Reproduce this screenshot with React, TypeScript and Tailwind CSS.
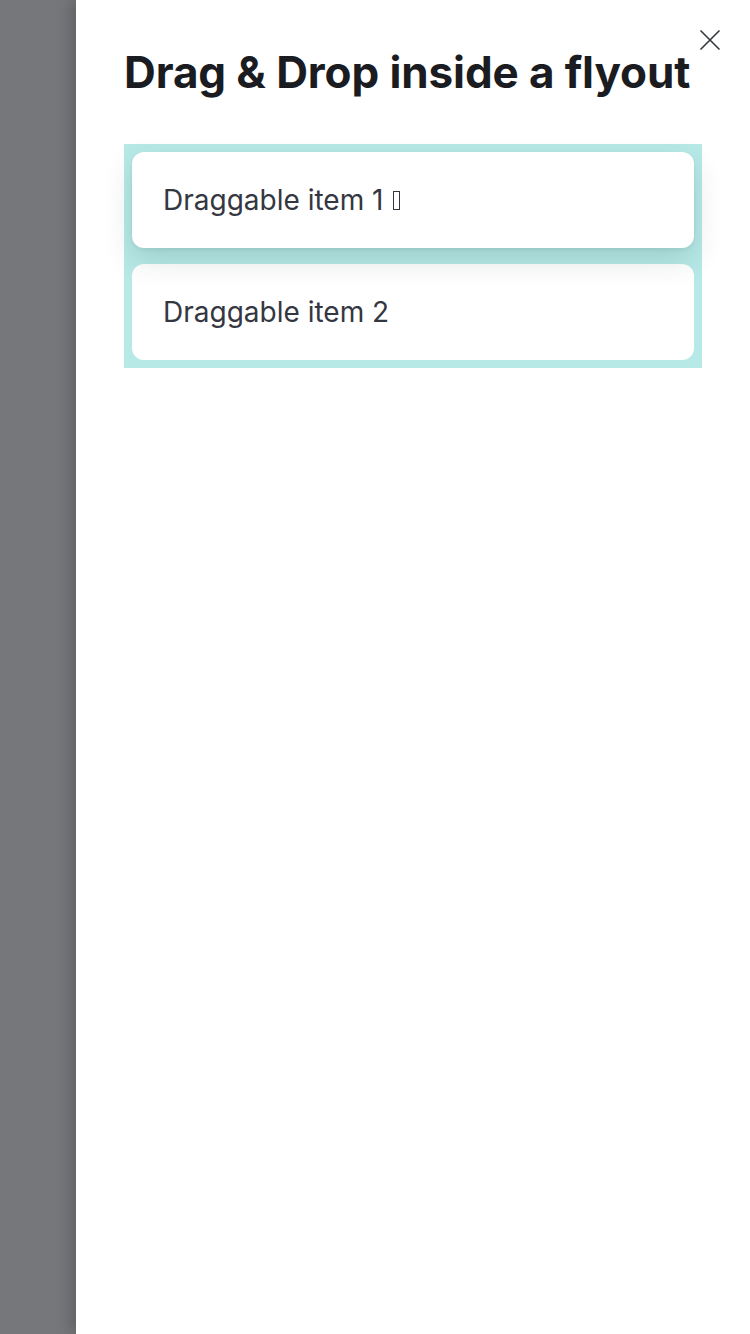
import React from "react";

export default function App() {
  return (
    <div className="flex h-[1334px] w-[750px] overflow-hidden bg-[#76777a]" style={{ fontFamily: "Inter, 'Noto Sans', sans-serif" }}>
      <div className="w-[76px] shrink-0" />
      <div className="relative flex-1 bg-white px-[48px] pt-[44px] shadow-[-6px_0_14px_rgba(0,0,0,0.18)]">
        <button className="absolute right-[29px] top-[29px] flex h-[22px] w-[22px] items-center justify-center text-[#343741]" aria-label="Close">
          <svg width="22" height="22" viewBox="0 0 22 22" fill="none" stroke="currentColor" strokeWidth="1.6">
            <path d="M1.5 1.5 L20.5 20.5 M20.5 1.5 L1.5 20.5" />
          </svg>
        </button>
        <h1 className="whitespace-nowrap text-[44px] font-bold leading-[56px] tracking-[-0.1px] text-[#1a1c21]">
          Drag &amp; Drop inside a flyout
        </h1>
        <div className="mt-[44px] flex flex-col gap-[16px] bg-[#b7eae7] p-[8px]">
          <div className="relative z-10 flex h-[96px] items-center rounded-[12px] bg-white pl-[31px] text-[28px] text-[#343741] shadow-[0_12px_30px_rgba(0,40,40,0.14),0_2px_4px_rgba(0,0,0,0.06)]">
            <span>Draggable item 1</span>
            <span className="ml-[10px] inline-block h-[19px] w-[7px] border border-[#343741]" />
          </div>
          <div className="flex h-[96px] items-center rounded-[12px] bg-white pl-[31px] text-[28px] text-[#343741]">
            Draggable item 2
          </div>
        </div>
      </div>
    </div>
  );
}
